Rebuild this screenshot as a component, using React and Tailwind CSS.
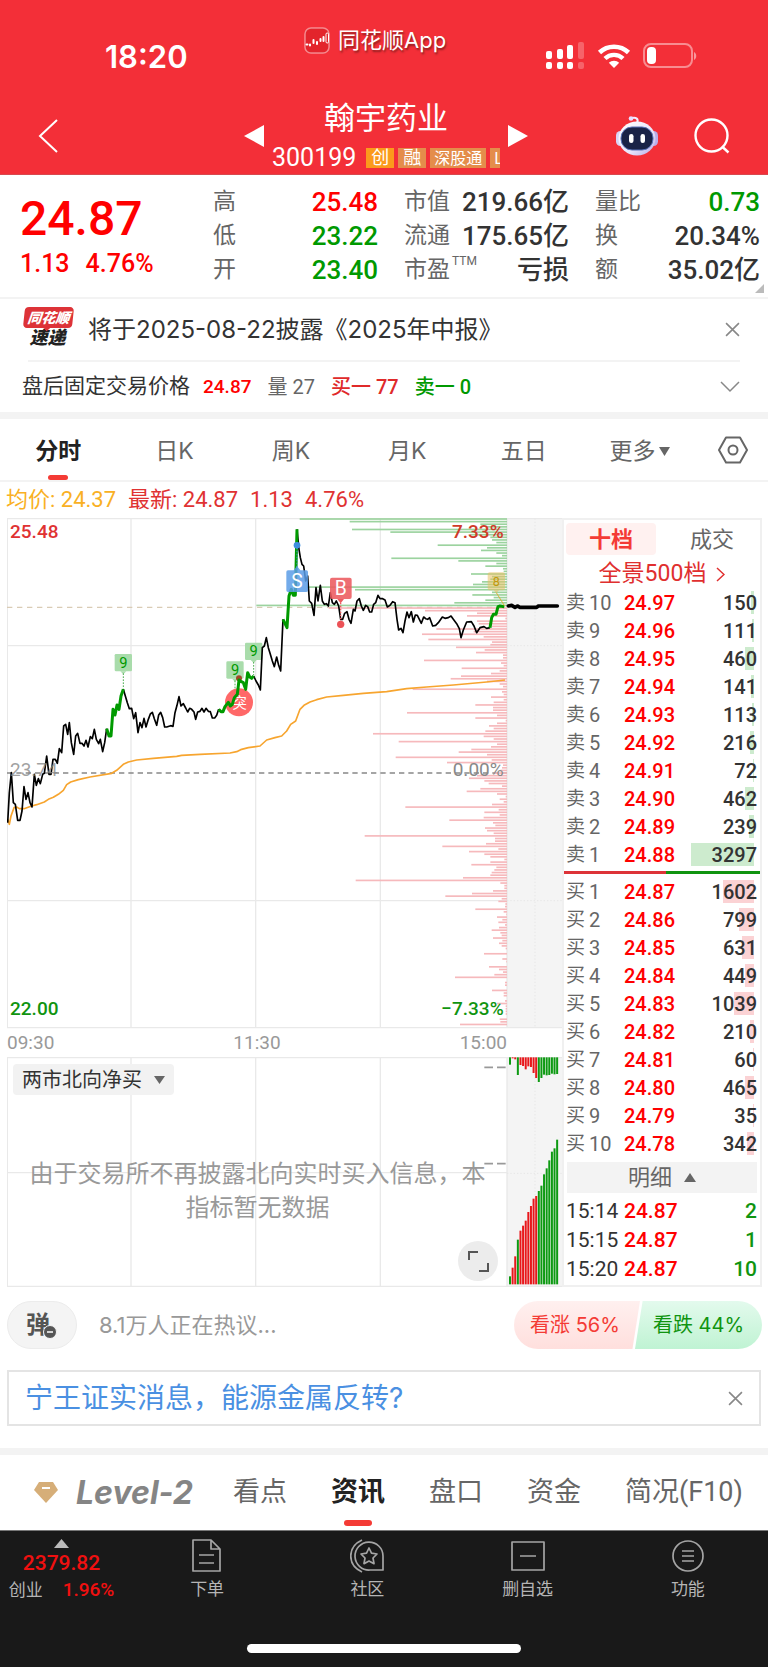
import { useState } from 'react'

const NUM = "[font-family:Roboto,'Noto_Sans_CJK_SC',sans-serif]"

const STATS = [
  [{ label: '高', val: '25.48', color: 'text-[#f00]' }, { label: '低', val: '23.22', color: 'text-[#009900]' }, { label: '开', val: '23.40', color: 'text-[#009900]' }],
  [{ label: '市值', val: '219.66亿', color: 'text-[#333]' }, { label: '流通', val: '175.65亿', color: 'text-[#333]' }, { label: '市盈', sup: 'TTM', val: '亏损', color: 'text-[#333]' }],
  [{ label: '量比', val: '0.73', color: 'text-[#009900]' }, { label: '换', val: '20.34%', color: 'text-[#333]' }, { label: '额', val: '35.02亿', color: 'text-[#333]' }],
]

const PERIODS = ['分时', '日K', '周K', '月K', '五日', '更多']

const SELLS = [
  [10, '24.97', 150], [9, '24.96', 111], [8, '24.95', 460], [7, '24.94', 141], [6, '24.93', 113],
  [5, '24.92', 216], [4, '24.91', 72], [3, '24.90', 462], [2, '24.89', 239], [1, '24.88', 3297],
]
const BUYS = [
  [1, '24.87', 1602], [2, '24.86', 799], [3, '24.85', 631], [4, '24.84', 449], [5, '24.83', 1039],
  [6, '24.82', 210], [7, '24.81', 60], [8, '24.80', 465], [9, '24.79', 35], [10, '24.78', 342],
]
const TRADES = [['15:14', '24.87', 2], ['15:15', '24.87', 1], ['15:20', '24.87', 10]]

// Price line, split where the colour changes
const BLACK_LINES = [
  '23,940 28,850 34,790 40,880 46,885 53,933 60,933 66,905 72,832 78,870 84,850 90,880 96,893 103,795 109,828 115,808 121,823 128,795 133,792 140,740 147,795 153,795 159,750 166,750 172,762 178,718 185,730 191,650 197,645 203,675 208,640 214,700 221,735 227,680 233,672 240,702 246,702 252,710 258,693 264,713 271,682 277,688 283,660 289,690 296,703 301,690 308,727 314,700 320,658',
  '370,540 376,560 382,580 388,598 395,597 401,628 407,610 414,670 420,640 426,655 432,627 438,653 445,630 451,614 457,609 463,628 470,648 476,617 482,609 488,625 494,653 500,653 512,649 519,651 525,610 531,588 537,562 543,590 550,583 557,596 563,608 569,597 575,600 582,608 587,630 593,608 600,606 606,597 612,608 618,597 625,606 631,607 637,626 644,626 650,618 656,600',
  '761,500 768,515 775,527 781,542 787,415 793,410 799,385 805,415 811,435 817,455 823,472 830,443 836,468 842,485 849,330',
  '891,60 897,120 901,145 906,165 911,170 917,215 923,200 928,275 935,282 942,318 948,235 954,275 961,228 967,275 973,285 979,283 985,290 991,250 997,280 1003,285 1009,275 1016,290 1022,330 1028,330 1034,312 1041,307 1047,330 1053,342 1060,300 1065,305 1071,275 1078,268 1084,290 1090,303 1097,288 1103,292 1109,308 1115,308 1121,285 1127,280 1134,258 1140,268 1148,268 1155,272 1162,293 1170,288 1178,277 1185,280 1191,330 1196,362 1203,357 1209,370 1215,335 1221,308 1227,325 1234,307 1240,338 1246,317 1252,318 1258,330 1264,342 1271,323 1277,328 1283,330 1289,325 1298,350 1307,348 1315,340 1327,323 1335,327 1345,325 1353,320 1360,330 1370,343 1378,358 1383,385 1390,362 1400,338 1414,337 1422,350 1430,370 1440,355 1452,352 1460,357 1470,355',
]
const GREEN_LINES = [
  '320,658 327,680 333,680 339,600 345,617 351,587 357,600 363,560 370,540',
  '656,600 663,607 669,607 675,592 685,579 691,590 697,585 703,565 712,555 717,512 724,517 730,520 737,540 743,490 749,503 755,507 761,500',
  '849,330 855,343 861,355 867,260 874,240 880,258 886,258 891,60',
  '1470,355 1475,325 1480,315 1488,315 1494,292 1500,290 1513,292',
]
const AVG_LINE =
  '23,930 28,945 33,920 42,895 50,893 58,898 72,898 95,890 110,886 133,878 145,870 160,864 175,855 190,843 200,826 212,818 235,811 270,803 335,792 350,783 370,765 385,758 410,752 460,747 530,741 545,738 600,735 690,731 710,727 722,721 745,715 780,710 800,692 825,685 845,680 860,665 872,645 887,635 900,600 912,588 930,578 950,571 980,563 1030,558 1090,552 1160,547 1220,538 1280,533 1360,527 1460,518 1515,512'

// Volume by price, top to bottom
const VOL_ABOVE = [
  622, 472, 80, 60, 465, 350, 110, 50, 45, 32, 208, 60, 78, 32, 15, 347, 146, 32, 65, 12,
  10, 108, 45, 50, 75, 102, 600, 456, 45, 104, 40, 65, 158, 752,
]
const VOL_BELOW = [
  535, 246, 90, 120, 5, 90, 85, 45, 212, 100, 255, 70, 236, 45, 50, 153, 67, 93, 12, 12,
  249, 18, 10, 136, 22, 48, 138, 169, 60, 22, 12, 283, 15, 10, 48, 10, 40, 95, 42, 42,
  300, 30, 95, 4, 30, 54, 40, 65, 402, 70, 40, 325, 30, 48, 107, 145, 60, 334, 46, 180,
  12, 15, 20, 40, 90, 114, 68, 55, 15, 80, 121, 30, 4, 22, 10, 45, 305, 25, 68, 22,
  70, 173, 42, 35, 66, 60, 40, 427, 36, 36, 63, 194, 26, 114, 68, 50, 8, 50, 107, 32,
  38, 46, 50, 132, 454, 20, 8, 8, 42, 105, 185, 16, 26, 5, 6, 95, 10, 2, 30, 14,
  26, 6, 24, 46, 20, 16, 42, 14, 24, 16, 4, 0, 69, 0, 14, 2, 0, 54, 24, 12,
  38, 156, 0, 6, 6, 0, 45, 10, 10, 0, 6, 30, 4, 4, 4, 4, 0, 22, 20, 141,
]

// After-hours bars: [colour, length from the top, height from the bottom]
const AFTER = [
  ['g', 22, 24], ['r', 3, 50], ['r', 6, 84], ['g', 53, 134], ['r', 23, 161], ['r', 26, 176], ['r', 36, 191],
  ['r', 27, 217], ['r', 29, 235], ['r', 47, 257], ['r', 62, 265], ['g', 74, 280], ['g', 62, 296], ['g', 52, 330],
  ['g', 54, 348], ['g', 53, 372], ['g', 49, 398], ['g', 51, 408], ['g', 50, 434],
]

function StatusIcons() {
  return (
    <div className="flex items-center gap-3">
      <svg width="39" height="28" viewBox="0 0 39 28" fill="#fff">
        <rect x="0" y="9" width="6" height="8" rx="2" />
        <rect x="11" y="7" width="6" height="10" rx="2" />
        <rect x="21" y="3" width="6" height="14" rx="2" />
        <rect x="32" y="0" width="6" height="17" rx="2" opacity=".25" />
        <rect x="0" y="20" width="6" height="7" rx="2" />
        <rect x="11" y="20" width="6" height="7" rx="2" />
        <rect x="21" y="20" width="6" height="7" rx="2" />
        <rect x="32" y="20" width="6" height="7" rx="2" opacity=".25" />
      </svg>
      <svg width="34" height="25" viewBox="0 0 34 25">
        <path d="M2.5 8.5a21 21 0 0 1 29 0" fill="none" stroke="#fff" strokeWidth="4.6" />
        <path d="M8 14.5a13 13 0 0 1 18 0" fill="none" stroke="#fff" strokeWidth="4.4" />
        <path d="M17 24l-5.200-5.200a7.500 7.500 0 0 1 10.400 0z" fill="#fff" />
      </svg>
      <svg width="54" height="26" viewBox="0 0 54 26">
        <rect x="1" y="1" width="48" height="23" rx="7" fill="none" stroke="#fff" strokeOpacity=".45" strokeWidth="2" />
        <rect x="4" y="4" width="9" height="17" rx="4" fill="#fff" />
        <path d="M51 9v8c3-1.500 3-6.500 0-8z" fill="#fff" opacity=".5" />
      </svg>
    </div>
  )
}

function Robot() {
  return (
    <svg width="42" height="40" viewBox="0 0 42 40">
      <defs>
        <linearGradient id="head" x1="0" y1="0" x2="1" y2="1">
          <stop offset="0" stopColor="#fff" />
          <stop offset=".6" stopColor="#e9e6fb" />
          <stop offset="1" stopColor="#b3a6e6" />
        </linearGradient>
      </defs>
      <path d="M21 7c2-4-1-6-5-5" fill="none" stroke="#f4ecff" strokeWidth="2" />
      <circle cx="15" cy="2.500" r="2.300" fill="#e8dcff" />
      <rect x="0" y="15" width="9" height="15" rx="4.500" fill="#d9d4f5" />
      <rect x="33" y="15" width="9" height="15" rx="4.500" fill="#b9aeea" />
      <ellipse cx="21" cy="22.500" rx="18.500" ry="17" fill="url(#head)" />
      <rect x="5" y="11" width="32" height="23" rx="11" fill="#1a2347" stroke="#5b73b8" strokeWidth="1" />
      <rect x="13" y="18" width="4.500" height="9" rx="2.200" fill="#fff" />
      <rect x="24.500" y="18" width="4.500" height="9" rx="2.200" fill="#fff" />
    </svg>
  )
}

function Header() {
  return (
    <header className="bg-[#f32f38] text-white border-b border-[#d8494f]">
      <div className="flex items-start h-[90px] pl-[105px] pr-[71px]">
        <div className="w-[199px] pt-9 text-[31px] leading-[42px] font-semibold">18:20</div>
        <div className="flex items-center gap-2 pt-6">
          <svg width="26" height="27" viewBox="0 0 26 27">
            <rect x="1" y="1" width="24" height="25" rx="6" fill="#e3242c" stroke="#fff" strokeOpacity=".45" strokeWidth="1.500" />
            <path d="M2.500 17.500h1M6 17.500v1M9.500 13v3M13 15v2M16.500 12v2M19.500 10v4" stroke="#fff" strokeWidth="2" strokeLinecap="round" />
            <rect x="22" y="6" width="2.500" height="10" rx="1.200" fill="none" stroke="#fff" />
          </svg>
          <span className="text-[22px] leading-8 [text-shadow:1px_2px_2px_#8a2020]">同花顺App</span>
        </div>
        <div className="ml-auto pt-[42px]"><StatusIcons /></div>
      </div>
      <div className="flex items-center h-[84px] pt-2 pl-9 pr-[38px]">
        <button className="w-[208px]" aria-label="返回">
          <svg width="24" height="36" viewBox="0 0 24 36"><path d="M21 2L4 18l17 16" fill="none" stroke="#fff" strokeWidth="2" /></svg>
        </button>
        <button aria-label="上一只"><svg width="20" height="22" viewBox="0 0 20 22"><path d="M20 0v22L0 11z" fill="#fff" /></svg></button>
        <div className="w-[244px] px-2 flex flex-col items-center">
          <h1 className="text-[31px] leading-10">翰宇药业</h1>
          <div className="w-full flex items-center gap-1 mt-1 overflow-hidden">
            <span className={`${NUM} text-[25px] leading-8 mr-1.5`}>300199</span>
            <span className="shrink-0 bg-[#fb9a1c] px-[5px] text-lg leading-5">创</span>
            <span className="shrink-0 bg-[#e48d4b] px-[5px] text-lg leading-5">融</span>
            <span className="shrink-0 bg-[#e48d4b] px-1 text-base leading-5">深股通</span>
            <span className="shrink-0 bg-[#e48d4b] px-1 text-base leading-5">L</span>
          </div>
        </div>
        <button aria-label="下一只"><svg width="20" height="22" viewBox="0 0 20 22"><path d="M0 0v22l20-11z" fill="#fff" /></svg></button>
        <div className="ml-auto flex items-center gap-9">
          <button aria-label="智能助手"><Robot /></button>
          <button aria-label="搜索">
            <svg width="36" height="36" viewBox="0 0 36 36" fill="none" stroke="#fff" strokeWidth="2.400">
              <circle cx="17.500" cy="17.500" r="16" />
              <path d="M28 28.500l6.500 6" />
            </svg>
          </button>
        </div>
      </div>
    </header>
  )
}

function Quote() {
  return (
    <section className={`${NUM} relative grid grid-cols-[167px_1fr_1fr_1fr] gap-x-[26px] pl-5 pr-2 pt-2.5 pb-2.5 border-b-2 border-[#f3f3f3]`}>
      <div className="font-medium text-[#f00]">
        <div className="text-5xl leading-[60px] pt-1">24.87</div>
        <div className="text-[25px] leading-8 flex gap-4 -mt-px"><span>1.13</span><span>4.76%</span></div>
      </div>
      {STATS.map((col, i) => (
        <dl key={i}>
          {col.map(({ label, sup, val, color }) => (
            <div key={label} className="flex justify-between h-[34px] leading-[34px]">
              <dt className="text-[23px] text-[#666] flex">{label}{sup && <span className="text-xs leading-4 pl-0.5">{sup}</span>}</dt>
              <dd className={`text-[26px] font-medium ${color}`}>{val}</dd>
            </div>
          ))}
        </dl>
      ))}
      <svg className="absolute right-1 bottom-1" width="9" height="9"><path d="M9 0v9H0z" fill="#bbb" /></svg>
    </section>
  )
}

function Cross({ size }) {
  return (
    <svg width={size} height={size} viewBox="0 0 14 14"><path d="M1 1l12 12M13 1L1 13" stroke="#888" strokeWidth="1.500" /></svg>
  )
}

function Notices() {
  return (
    <section className="px-[22px]">
      <div className="flex items-center h-[61px]">
        <div className="w-[51px] -mt-1 mr-[15px] text-center italic font-black">
          <div className="relative -skew-x-6 rounded-sm bg-[#dd3338] text-white text-[14px] leading-[21px] ml-0.5">
            同花顺
            <span className="absolute left-1/2 -bottom-0.5 size-1.5 -ml-1 rotate-45 bg-[#dd3338]" />
          </div>
          <div className="text-[#222] text-[18px] leading-5">速递</div>
        </div>
        <p className="text-[24px] text-[#333]">将于2025-08-22披露《2025年中报》</p>
        <button className="ml-auto mr-1.5" aria-label="关闭公告"><Cross size={15} /></button>
      </div>
      <div className="border-t-2 border-[#f3f3f3] mx-1.5" />
      <div className={`${NUM} flex items-center h-[50px] text-[20px]`}>
        <span className="text-[#333] w-[181px] text-[21px] whitespace-nowrap">盘后固定交易价格</span>
        <span className="text-[#f00] font-medium text-[19px]">24.87</span>
        <span className="text-[#666] ml-4">量 27</span>
        <span className="text-[#e02a2a] ml-4 font-medium">买一 77</span>
        <span className="text-[#009900] ml-4 font-medium">卖一 0</span>
        <button className="ml-auto mr-1.5" aria-label="展开">
          <svg width="20" height="12" viewBox="0 0 20 12"><path d="M1 1l9 9 9-9" fill="none" stroke="#888" strokeWidth="1.500" /></svg>
        </button>
      </div>
    </section>
  )
}

function Periods() {
  const [active, setActive] = useState('分时')
  return (
    <nav className="grid grid-cols-[repeat(6,5fr)_3fr] h-[63px] border-b-2 border-[#f3f3f3] text-[23px]">
      {PERIODS.map(p => (
        <button
          key={p}
          onClick={() => setActive(p)}
          className={`relative flex items-center justify-center gap-1 pt-1 ${p === active ? 'font-bold text-[#222]' : 'text-[#666]'}`}
        >
          {p}
          {p === '更多' && <svg width="11" height="9"><path d="M0 0h11L5.500 9z" fill="#666" /></svg>}
          {p === active && <span className="absolute bottom-0 w-5 h-[5px] rounded-full bg-[#f43b35]" />}
        </button>
      ))}
      <button className="flex items-center pl-5" aria-label="设置">
        <svg width="30" height="28" viewBox="0 0 30 28" fill="none" stroke="#666" strokeWidth="2">
          <path d="M8 1.500h14L29 14l-7 12.500H8L1 14z" strokeLinejoin="round" />
          <circle cx="15" cy="14" r="4.500" />
        </svg>
      </button>
    </nav>
  )
}

function Nine({ x, y, to }) {
  return (
    <g>
      <rect x={x - 26} y={y} width="52" height="52" rx="4" fill="#a9dcab" />
      <path d={`M${x - 9} ${y + 52}h18l-9 9z`} fill="#a9dcab" />
      <text x={x} y={y + 41} fontSize="44" textAnchor="middle" fill="#009900">9</text>
      <path d={`M${x} ${y + 58}V${to}`} stroke="#4fae52" strokeWidth="3" strokeDasharray="5 4" />
    </g>
  )
}

// Both charts are drawn at three units to the pixel
function PriceChart() {
  return (
    <svg className={`${NUM} block w-full`} viewBox="21 26 1665 1533">
      <rect x="1521" y="27" width="165" height="1528" fill="#f4f4f4" />
      <path d="M21 28H1686M21 409H1521M21 1174H1521M21 1555H1686M22 27V1555M393 27V1555M767 27V1555M1141 27V1555M1521 27V1555" stroke="#e9e9e9" strokeWidth="4" fill="none" />
      <path d="M1605 27V1555M1521 409H1686M1521 1174H1686" stroke="#e6e6e6" strokeWidth="3" strokeDasharray="4 6" />
      <path d="M21 294H1521" stroke="#d9cbb5" strokeWidth="4" strokeDasharray="16 14" />
      <path d="M21 791H1521" stroke="#888" strokeWidth="4" strokeDasharray="16 12" />

      {[...VOL_ABOVE, ...VOL_BELOW].map((len, i) => (
        <rect key={i} x={1521 - len} y={26.500 + i * 7.857} width={len} height="5" fill={i < VOL_ABOVE.length ? '#9cd39f' : '#f6b9bc'} />
      ))}

      <Nine x={370} y={434} to={538} />
      <Nine x={705} y={456} to={560} />
      <Nine x={761} y={400} to={498} />

      <polyline points={AVG_LINE} fill="none" stroke="#f7a52f" strokeWidth="5" strokeLinejoin="round" />
      {BLACK_LINES.map((p, i) => <polyline key={i} points={p} fill="none" stroke="#000" strokeWidth="5" strokeLinejoin="round" />)}
      <circle cx="717" cy="579" r="42" fill="#ff5b5b" fillOpacity=".92" />
      <text x="719" y="595" fontSize="44" textAnchor="middle" fill="#fff">突</text>
      <circle cx="717" cy="507" r="9" fill="#a34728" />
      {GREEN_LINES.map((p, i) => <polyline key={i} points={p} fill="none" stroke="#009a00" strokeWidth="9" strokeLinejoin="round" />)}
      <polyline points="1525,290 1535,288 1545,294 1552,290 1560,294 1610,294 1615,290 1672,290" fill="none" stroke="#000" strokeWidth="11" strokeLinecap="round" strokeLinejoin="round" />

      <g fontSize="57" fontWeight="500">
        <text x="30" y="86" fill="#e03232">25.48</text>
        <text x="1511" y="86" textAnchor="end" fill="#cf3a28">7.33%</text>
        <text x="30" y="801" fill="#888" fillOpacity=".8" fontWeight="400">23.74</text>
        <text x="1511" y="801" textAnchor="end" fill="#888" fontWeight="400">0.00%</text>
        <text x="30" y="1518" fill="#109410">22.00</text>
        <text x="1511" y="1518" textAnchor="end" fill="#109410">−7.33%</text>
      </g>

      {/* Sell, buy and warning marks */}
      <path d="M891 115V185" stroke="#4c93dc" strokeWidth="3" strokeDasharray="5 4" />
      <circle cx="891" cy="108" r="10" fill="#3f8ee0" />
      <path d="M891 170l10 13h18q5 0 5 5v55q0 5-5 5h-55q-5 0-5-5v-55q0-5 5-5h17z" fill="#5b9ce6" fillOpacity=".85" />
      <text x="891" y="236" fontSize="58" textAnchor="middle" fill="#fff">S</text>
      <rect x="990" y="205" width="65" height="64" rx="6" fill="#ec5a5e" fillOpacity=".88" />
      <path d="M1012 269h20l-10 13z" fill="#ec5a5e" />
      <text x="1022" y="258" fontSize="58" textAnchor="middle" fill="#fff">B</text>
      <path d="M1022 280V335" stroke="#ec5a5e" strokeWidth="4" strokeDasharray="5 4" />
      <circle cx="1022" cy="345" r="11" fill="#ec5257" />
      <path d="M1469 189h40q6 0 6 6v42q0 6-6 6h-12l-8 9-8-9h-12q-6 0-6-6v-42q0-6 6-6z" fill="#e8bf62" fillOpacity=".55" />
      <text x="1489" y="229" fontSize="38" textAnchor="middle" fill="#c4980c">8</text>
      <path d="M1489 250l25 40" stroke="#d9b23c" strokeWidth="3" />
    </svg>
  )
}

function NorthChart() {
  return (
    <div className="relative">
      <svg className="block w-full" viewBox="21 50 1665 690">
        <rect x="1521" y="51" width="165" height="687" fill="#f4f4f4" />
        <path d="M21 52H1686M21 397H1521M21 738H1686M22 51V738M393 51V738M767 51V738M1141 51V738M1521 51V738" stroke="#e9e9e9" strokeWidth="4" fill="none" />
        <path d="M1605 51V738M1521 399H1686" stroke="#e6e6e6" strokeWidth="3" strokeDasharray="4 6" />
        <path d="M1453 81h26M1491 81h26M1453 370h26M1491 370h26" stroke="#999" strokeWidth="5" />
        {AFTER.map(([c, top, bottom], i) => (
          <g key={i} fill={c === 'g' ? '#0d9a12' : '#e8171b'}>
            <rect x={1527 + i * 7.857} y="51" width="6" height={top} />
            <rect x={1527 + i * 7.857} y={732 - bottom} width="6" height={bottom} />
          </g>
        ))}
      </svg>
      <button className="absolute left-[6px] top-[7px] h-[31px] px-[9px] rounded-sm bg-[#f2f2f2] text-[#333] text-xl flex items-center gap-3">
        两市北向净买
        <svg width="11" height="8"><path d="M0 0h11L5.500 8z" fill="#666" /></svg>
      </button>
      <p className="absolute left-0 right-[54px] top-[100px] px-4 text-center text-[24px] leading-[34px] text-[#999]">
        由于交易所不再披露北向实时买入信息，本指标暂无数据
      </p>
      <button className="absolute right-[64px] bottom-[6px] size-10 rounded-full bg-[#ececec] flex items-center justify-center" aria-label="全屏">
        <svg width="21" height="21" viewBox="0 0 21 21" fill="none" stroke="#555" strokeWidth="2"><path d="M1 9V1h9M11 20h9v-8" /></svg>
      </button>
    </div>
  )
}

function Level({ side, n, price, vol, bar }) {
  return (
    <tr className="h-7">
      <td className="w-[60px] pl-0.5 text-[#666]">
        <div className="flex items-center gap-1 h-7"><span className="text-[19px]">{side}</span>{n}</div>
      </td>
      <td className="text-[#f00] font-medium">{price}</td>
      <td className="relative w-[80px] pr-[3px] text-right font-medium text-[#333]">
        <span className={`absolute right-[6px] top-0.5 h-[23px] ${bar}`} style={{ width: `${Math.round(vol / 52)}px` }} />
        <span className="relative">{vol}</span>
      </td>
    </tr>
  )
}

function OrderBook() {
  return (
    <aside className={`${NUM} w-[200px] shrink-0 border-2 border-[#f0f0f0]`}>
      <div className="grid grid-cols-[90px_1fr] pl-0.5 pt-[3px] text-[22px]">
        <button className="h-8 rounded bg-[#fff1f0] text-[#f43b35] font-bold">十档</button>
        <button className="h-8 pl-2 text-[#666]">成交</button>
      </div>
      <a href="#depth" className="flex items-center justify-center gap-2.5 h-[34px] pt-1 text-[23px] text-[#e02f2f]">
        全景500档
        <svg width="9" height="15" viewBox="0 0 9 15"><path d="M1 1l7 6.500L1 14" fill="none" stroke="#e02f2f" strokeWidth="1.500" /></svg>
      </a>
      <table className="w-full text-xl leading-7">
        <tbody>{SELLS.map(([n, price, vol]) => <Level key={n} side="卖" n={n} price={price} vol={vol} bar="bg-[#cdebce]" />)}</tbody>
      </table>
      <div className="flex h-[3px] mt-0.5 mb-1">
        <div className="w-[52%] bg-[#dd3338]" />
        <div className="flex-1 bg-[#109410]" />
      </div>
      <table className="w-full text-xl leading-7">
        <tbody>{BUYS.map(([n, price, vol]) => <Level key={n} side="买" n={n} price={price} vol={vol} bar="bg-[#fbd2d4]" />)}</tbody>
      </table>
      <button className="flex w-[190px] mx-auto mt-1 mb-1 h-[31px] items-center justify-center gap-3 bg-[#f3f3f3] text-[22px] text-[#666]">
        明细
        <svg width="12" height="9"><path d="M0 9h12L6 0z" fill="#666" /></svg>
      </button>
      <table className="w-full text-[21px] leading-[29px] font-medium">
        <tbody>
          {TRADES.map(([time, price, vol]) => (
            <tr key={time}>
              <td className="w-[60px] pl-0.5 text-[#333] font-normal">{time}</td>
              <td className="text-[#f00]">{price}</td>
              <td className="text-right pr-[3px] text-[#109410]">{vol}</td>
            </tr>
          ))}
        </tbody>
      </table>
    </aside>
  )
}

function Discussion() {
  return (
    <section className="flex items-center pl-[7px] pr-1.5 mt-[14px] h-12">
      <button className="relative w-[70px] h-12 rounded-full bg-[#f4f4f4] border border-[#ececec] text-[24px] font-bold text-[#555] pr-2" aria-label="弹幕">
        弹
        <svg className="absolute left-[35px] bottom-[9px]" width="14" height="14" viewBox="0 0 14 14">
          <circle cx="7" cy="7" r="6.500" fill="#555" stroke="#f4f4f4" />
          <path d="M4 7h6" stroke="#fff" strokeWidth="1.500" />
        </svg>
      </button>
      <span className="pl-[22px] text-[22px] text-[#999]">8.1万人正在热议...</span>
      <div className="ml-auto flex text-xl">
        <button className="w-[126px] h-12 pr-1 rounded-l-full bg-linear-to-b from-[#fff0ef] to-[#ffdfdd] text-[#f43b35] [clip-path:polygon(0_0,100%_0,94%_100%,0_100%)]">看涨 56%</button>
        <button className="w-[127px] h-12 -ml-[5px] rounded-r-full bg-linear-to-b from-[#e3faed] to-[#bff3d3] text-[#109410] [clip-path:polygon(6%_0,100%_0,100%_100%,0_100%)]">看跌 44%</button>
      </div>
    </section>
  )
}

function InfoTabs() {
  const [active, setActive] = useState('资讯')
  return (
    <nav className="flex items-center h-[75px] pl-[34px] text-[27px] text-[#666] whitespace-nowrap">
      <svg width="24" height="21" viewBox="0 0 24 21">
        <path d="M5 0h14l5 8-12 13L0 8z" fill="#d6ae78" />
        <path d="M8 6h8" stroke="#fff" strokeWidth="2" />
      </svg>
      <button className="w-[157px] ml-[18px] text-left text-[32px] italic font-bold text-[#858585]">Level-2</button>
      <div className="flex gap-11 h-full">
        {['看点', '资讯', '盘口', '资金', '简况(F10)'].map(t => (
          <button key={t} onClick={() => setActive(t)} className={`${NUM} relative ${t === active ? 'font-bold text-[#222]' : ''}`}>
            {t}
            {t === active && <span className="absolute bottom-1 left-1/2 -ml-3.5 w-7 h-[6px] rounded-full bg-[#f43b35]" />}
          </button>
        ))}
      </div>
    </nav>
  )
}

const NAV = [
  { label: '下单', icon: <path d="M3 1h18l9 9v22H3zM21 1v9h9M9 16h15M9 24h15" /> },
  {
    label: '社区',
    icon: (
      <>
        <path d="M33 31H20a14 14 0 1 1 13-14z" />
        <path d="M12 1C-3 8-3 26 12 33" />
        <path d="M19 9l2.500 5.200 5.500.8-4 4 1 5.700-5-2.700-5 2.700 1-5.700-4-4 5.500-.8z" />
      </>
    ),
  },
  { label: '删自选', icon: <path d="M1 3h32v28H1zM9 17h16" /> },
  { label: '功能', icon: <><circle cx="17" cy="17" r="15" /><path d="M11 12h12M11 17h12M11 22h12" /></> },
]

function BottomBar() {
  return (
    <footer className="bg-[#191919] text-[#b5b5b5] border-t border-[#777]">
      <div className="flex h-[85px]">
        <div className={`${NUM} w-[127px] pr-1 flex flex-col items-center pt-2 text-[19px] font-medium text-[#f01010]`}>
          <svg width="15" height="9"><path d="M0 9h15L7.500 0z" fill="#bbb" /></svg>
          <div className="text-[21px] leading-[30px]">2379.82</div>
          <div className="flex gap-5 leading-6"><span className="text-[17px] font-normal text-[#b5b5b5]">创业</span>1.96%</div>
        </div>
        {NAV.map(({ label, icon }) => (
          <button key={label} className="flex-1 flex flex-col items-center pt-2 text-[17px]">
            <svg width="34" height="34" viewBox="0 0 34 34" fill="none" stroke="#a5a5a5" strokeWidth="1.700" strokeLinejoin="round">{icon}</svg>
            <span className="leading-8">{label}</span>
          </button>
        ))}
      </div>
      <div className="h-[51px] pt-7"><div className="mx-auto w-[274px] h-[9px] rounded-full bg-white" /></div>
    </footer>
  )
}

export default function App() {
  return (
    <div className="min-h-screen bg-white [font-family:Inter,'Noto_Sans_CJK_SC',sans-serif]">
      <Header />
      <Quote />
      <Notices />
      <div className="h-[7px] bg-[#f3f3f3]" />
      <Periods />
      <div className={`${NUM} flex gap-3 px-1.5 h-9 leading-9 text-[22px] text-[#e03232]`}>
        <span className="text-[#f9b024]">均价: 24.37</span>
        <span>最新: 24.87</span>
        <span>1.13</span>
        <span>4.76%</span>
      </div>
      <main className="flex pl-[7px] pr-1.5">
        <div className="flex-1 min-w-0">
          <PriceChart />
          <div className={`${NUM} grid grid-cols-3 pr-[55px] h-7 leading-7 text-[19px] text-[#999]`}>
            <span>09:30</span>
            <span className="text-center">11:30</span>
            <span className="text-right">15:00</span>
          </div>
          <NorthChart />
        </div>
        <OrderBook />
      </main>
      <Discussion />
      <div className="flex items-center justify-between mt-[21px] mx-[7px] h-14 pl-4 pr-4 border-2 border-[#e4e4e4]">
        <a href="#news" className="text-[28px] text-[#4a90e2]">宁王证实消息，能源金属反转?</a>
        <button aria-label="关闭"><Cross size={15} /></button>
      </div>
      <div className="h-[7px] mt-[22px] bg-[#f3f3f3]" />
      <InfoTabs />
      <BottomBar />
    </div>
  )
}
